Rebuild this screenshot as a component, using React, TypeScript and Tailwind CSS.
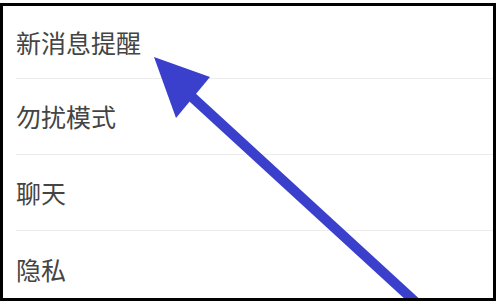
const items = ['新消息提醒', '勿扰模式', '聊天', '隐私'];

export default function App() {
  return (
    <div className="w-[500px] h-[301px] bg-white overflow-hidden">
      <div className="relative mt-[3px] w-[496px] h-[298px] border-[3px] border-black bg-white overflow-hidden">
        <div className="flex flex-col pl-[13px]">
          {items.map((label, i) => (
            <div
              key={label}
              className={
                i === 0
                  ? 'h-[73px] flex items-center border-b border-[#ececec]'
                  : i === items.length - 1
                  ? 'h-[76px] flex items-center'
                  : 'h-[76px] flex items-center border-b border-[#ececec]'
              }
            >
              <span
                className="text-[25px] leading-none text-[#444444]"
                style={{ fontFamily: '"Noto Sans CJK SC", "Noto Sans", sans-serif' }}
              >
                {label}
              </span>
            </div>
          ))}
        </div>
        <svg
          className="absolute left-[-3px] top-[-6px] pointer-events-none"
          width="500"
          height="301"
          viewBox="0 0 500 301"
        >
          <line x1="192" y1="97" x2="422" y2="308" stroke="#3a3fcc" strokeWidth="10" />
          <polygon points="154,57 210,77 176,118" fill="#3a3fcc" />
        </svg>
      </div>
    </div>
  );
}
